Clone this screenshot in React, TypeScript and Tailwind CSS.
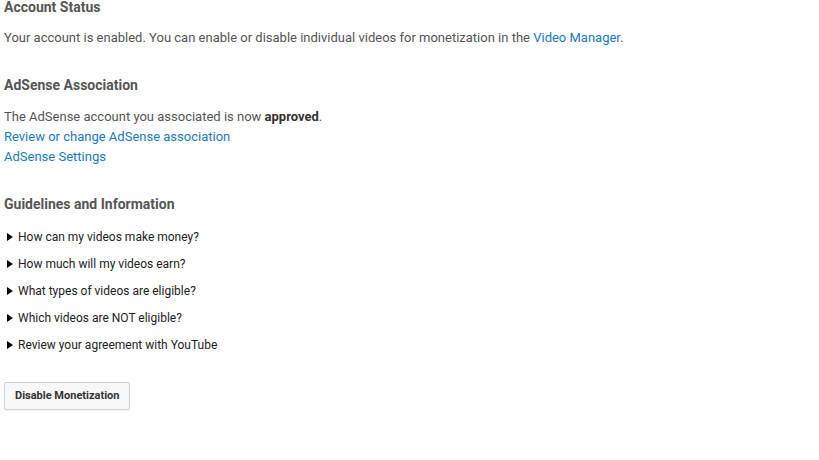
import React from "react";

const items = [
  "How can my videos make money?",
  "How much will my videos earn?",
  "What types of videos are eligible?",
  "Which videos are NOT eligible?",
  "Review your agreement with YouTube",
];

export default function App() {
  return (
    <div className="w-[819px] h-[460px] bg-white overflow-hidden pl-1 font-['Roboto',sans-serif] text-[13px] text-[#333]">
      <h2 className="-mt-[3px] h-5 leading-5 text-[14px] font-bold text-[#555]">Account Status</h2>
      <p className="mt-[11px] leading-5 text-[#555]">
        Your account is enabled. You can enable or disable individual videos for monetization in the{" "}
        <a className="text-[#167ac6]">Video Manager</a>.
      </p>
      <h2 className="mt-[27px] h-5 leading-5 text-[14px] font-bold text-[#555]">AdSense Association</h2>
      <div className="mt-3 leading-5 text-[#555]">
        <div>
          The AdSense account you associated is now <span className="font-bold text-[#333]">approved</span>.
        </div>
        <div>
          <a className="text-[#167ac6]">Review or change AdSense association</a>
        </div>
        <div>
          <a className="text-[#167ac6]">AdSense Settings</a>
        </div>
      </div>
      <h2 className="mt-[27px] h-5 leading-5 text-[14px] font-bold text-[#555]">Guidelines and Information</h2>
      <ul className="mt-[9px]">
        {items.map((t) => (
          <li key={t} className="h-[27px] flex items-center text-[12px] text-[#222]">
            <svg width="6" height="8" viewBox="0 0 6 8" className="ml-[3px] mr-[5px]">
              <polygon points="0,0 6,4 0,8" fill="#000" />
            </svg>
            {t}
          </li>
        ))}
      </ul>
      <button className="mt-[24px] h-[28px] px-[10px] border border-[#d3d3d3] rounded-[2px] bg-[#f8f8f8] text-[11px] font-bold text-[#333] shadow-[0_1px_0_rgba(0,0,0,0.05)]">
        Disable Monetization
      </button>
    </div>
  );
}
